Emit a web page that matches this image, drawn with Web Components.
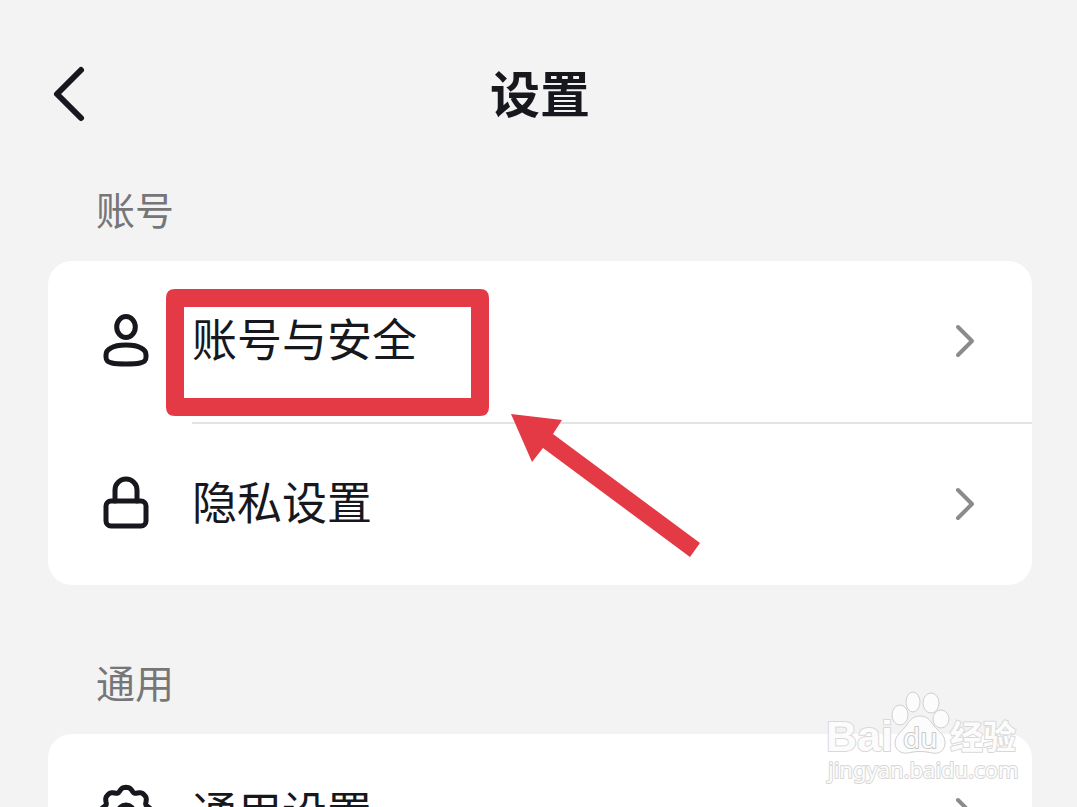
<!DOCTYPE html>
<html lang="zh-CN">
<head>
<meta charset="UTF-8">
<meta name="viewport" content="width=device-width, initial-scale=1">
<title>设置</title>
<style>
    html, body {
        height: 100%;
        margin: 0;
    }

    body {
        background-color: #f3f3f3;
        color: #17181d;
        font-family: "Noto Sans CJK SC", "Noto Sans", sans-serif;
        overflow: hidden;
    }
</style>
</head>
<body>
<settings-page>
    <page-header slot="header">设置</page-header>
    <settings-section label="账号">
        <settings-item icon="user" href="#account">账号与安全<click-hint slot="hint"></click-hint></settings-item>
        <settings-item icon="lock" href="#privacy">隐私设置</settings-item>
    </settings-section>
    <settings-section label="通用">
        <settings-item icon="gear" href="#general">通用设置</settings-item>
    </settings-section>
    <site-watermark slot="watermark"></site-watermark>
</settings-page>

<script>
// Wavy ring with eight lobes, the lobes rounder than the dips
function gearPath(cx, cy, radius, depth) {
    const points = [];
    for (let deg = 0; deg < 360; deg += 3) {
        const angle = deg * Math.PI / 180;
        const r = radius + depth * (Math.cos(8 * angle) - 0.2 * Math.cos(16 * angle));
        points.push(`${(cx + r * Math.sin(angle)).toFixed(2)} ${(cy - r * Math.cos(angle)).toFixed(2)}`);
    }
    return `M${points.join('L')}z`;
}

const icons = {
    user: `
        <ellipse cx="26" cy="14" rx="9.3" ry="10.5"/>
        <path d="M26 32c7 0 12 1 15 3 4 2 5 4 5 7v2c0 4-2 5-6 6-4 1-8 1-14 1s-10 0-14-1c-4-1-6-2-6-6v-2c0-3 1-5 5-7 3-2 8-3 15-3z"/>`,
    lock: `
        <rect x="6" y="26" width="40" height="25" rx="5"/>
        <path d="M15 26V15a11 11 0 0 1 22 0v11"/>`,
    gear: `
        <path d="${gearPath(26, 28, 24, 2.1)}"/>
        <circle cx="26" cy="28" r="8"/>`
};

class SettingsPage extends HTMLElement {
    constructor() {
        super();
        this.attachShadow({ mode: 'open' }).innerHTML = `
            <style>
                :host {
                    display: block;
                    position: relative;
                    height: 100%;
                    overflow: hidden;
                }

                main {
                    padding: 0 45px 48px 48px;
                }
            </style>
            <main>
                <slot name="header"></slot>
                <slot></slot>
            </main>
            <slot name="watermark"></slot>
        `;
    }
}
customElements.define('settings-page', SettingsPage);

class PageHeader extends HTMLElement {
    constructor() {
        super();
        this.attachShadow({ mode: 'open' }).innerHTML = `
            <style>
                :host {
                    display: block;
                    padding: 28px 0 3px;
                }

                header {
                    display: grid;
                    grid-template-columns: 1fr auto 1fr;
                    align-items: center;
                    height: 132px;
                }

                button {
                    justify-self: start;
                    display: flex;
                    padding: 0;
                    border: 0;
                    background: none;
                    color: inherit;
                }

                h1 {
                    margin: 0;
                    padding-bottom: 6px;
                    font-size: 50px;
                    line-height: 60px;
                    font-weight: 700;
                }
            </style>
            <header>
                <button type="button" aria-label="返回">
                    <svg width="44" height="60" viewBox="0 0 44 60" fill="none" stroke="currentColor" stroke-width="6" stroke-linecap="round" stroke-linejoin="round">
                        <path d="M33 6L9 30l24 24"/>
                    </svg>
                </button>
                <h1><slot></slot></h1>
            </header>
        `;
    }
}
customElements.define('page-header', PageHeader);

class SettingsSection extends HTMLElement {
    constructor() {
        super();
        this.attachShadow({ mode: 'open' });
    }

    connectedCallback() {
        this.shadowRoot.innerHTML = `
            <style>
                :host {
                    display: block;
                    margin-bottom: 51px;
                }

                h2 {
                    margin: 0;
                    padding: 0 48px 8px;
                    color: #767678;
                    font-size: 39px;
                    line-height: 90px;
                    font-weight: 400;
                }

                .card {
                    background-color: #fff;
                    border-radius: 24px;
                }

                ::slotted(settings-item:not(:last-child)) {
                    --divider: 2px solid #e3e3e4;
                }
            </style>
            <h2>${this.getAttribute('label')}</h2>
            <div class="card"><slot></slot></div>
        `;
    }
}
customElements.define('settings-section', SettingsSection);

class SettingsItem extends HTMLElement {
    constructor() {
        super();
        this.attachShadow({ mode: 'open' });
    }

    connectedCallback() {
        this.shadowRoot.innerHTML = `
            <style>
                :host {
                    display: block;
                    position: relative;
                }

                a {
                    display: grid;
                    grid-template-columns: 52px 1fr;
                    gap: 40px;
                    padding-left: 52px;
                    color: inherit;
                    text-decoration: none;
                }

                .icon {
                    align-self: center;
                    margin-bottom: 4px;
                    overflow: visible;
                }

                .body {
                    display: flex;
                    align-items: center;
                    justify-content: space-between;
                    padding-right: 52px;
                    border-bottom: var(--divider, none);
                    font-size: 45px;
                    line-height: 153px;
                }

                .label {
                    padding-bottom: 8px;
                }

                .chevron {
                    margin-bottom: 2px;
                    color: #8b8b8b;
                }
            </style>
            <a href="${this.getAttribute('href')}">
                <svg class="icon" width="52" height="56" viewBox="0 0 52 56" fill="none" stroke="currentColor" stroke-width="5" stroke-linecap="round" stroke-linejoin="round">
                    ${icons[this.getAttribute('icon')]}
                </svg>
                <div class="body">
                    <span class="label"><slot></slot></span>
                    <svg class="chevron" width="28" height="40" viewBox="0 0 28 40" fill="none" stroke="currentColor" stroke-width="4" stroke-linecap="round" stroke-linejoin="round">
                        <path d="M6 6l14 14L6 34"/>
                    </svg>
                </div>
            </a>
            <slot name="hint"></slot>
        `;
    }
}
customElements.define('settings-item', SettingsItem);

// Red frame and arrow drawn over the item to tap
class ClickHint extends HTMLElement {
    constructor() {
        super();
        this.attachShadow({ mode: 'open' }).innerHTML = `
            <style>
                :host {
                    position: absolute;
                    top: 28px;
                    left: 118px;
                    z-index: 1;
                    pointer-events: none;
                }

                svg {
                    display: block;
                }
            </style>
            <svg width="536" height="270" viewBox="0 0 536 270" aria-hidden="true">
                <path fill="#e33a45" fill-rule="evenodd" d="M9 0h305q9 0 9 9v109q0 9-9 9H9q-9 0-9-9V9q0-9 9-9zM18 18v91h287V18z"/>
                <path fill="#e33a45" d="M345 125l51 6-9 14 147 109-10 14-147-109-11 14z"/>
            </svg>
        `;
    }
}
customElements.define('click-hint', ClickHint);

class SiteWatermark extends HTMLElement {
    constructor() {
        super();
        this.attachShadow({ mode: 'open' }).innerHTML = `
            <style>
                :host {
                    position: absolute;
                    right: 53px;
                    bottom: 17px;
                    z-index: 2;
                    pointer-events: none;
                }

                svg {
                    display: block;
                }

                text {
                    paint-order: stroke;
                    font-family: "Noto Sans", sans-serif;
                }

                .brand {
                    font-family: "Liberation Sans", "Noto Sans CJK SC", sans-serif;
                    font-weight: 700;
                }
            </style>
            <svg width="200" height="100" viewBox="0 0 200 100" fill="#fcfcfc" stroke="#d8d8d8" stroke-width="2" stroke-linejoin="round">
                <text class="brand" x="2" y="61" font-size="43">Bai</text>
                <g stroke="#d0d0d0" stroke-width="1">
                    <ellipse cx="76" cy="25" rx="8" ry="10"/>
                    <ellipse cx="89" cy="12" rx="7" ry="10"/>
                    <ellipse cx="107" cy="13" rx="8" ry="10"/>
                    <ellipse cx="117" cy="29" rx="8" ry="9"/>
                    <path d="M96 26c7 0 10 4 14 10 4 5 12 9 11 18-1 8-7 10-13 9-8-2-16-2-24 0-7 1-13-3-13-10 0-7 6-11 11-17 4-6 7-10 14-10z"/>
                </g>
                <text x="79" y="58" font-size="28" stroke="#c8c8c8">du</text>
                <text class="brand" x="126" y="59" font-size="33">经验</text>
                <text x="4" y="88" font-size="22">jingyan.baidu.com</text>
            </svg>
        `;
    }
}
customElements.define('site-watermark', SiteWatermark);
</script>
</body>
</html>
